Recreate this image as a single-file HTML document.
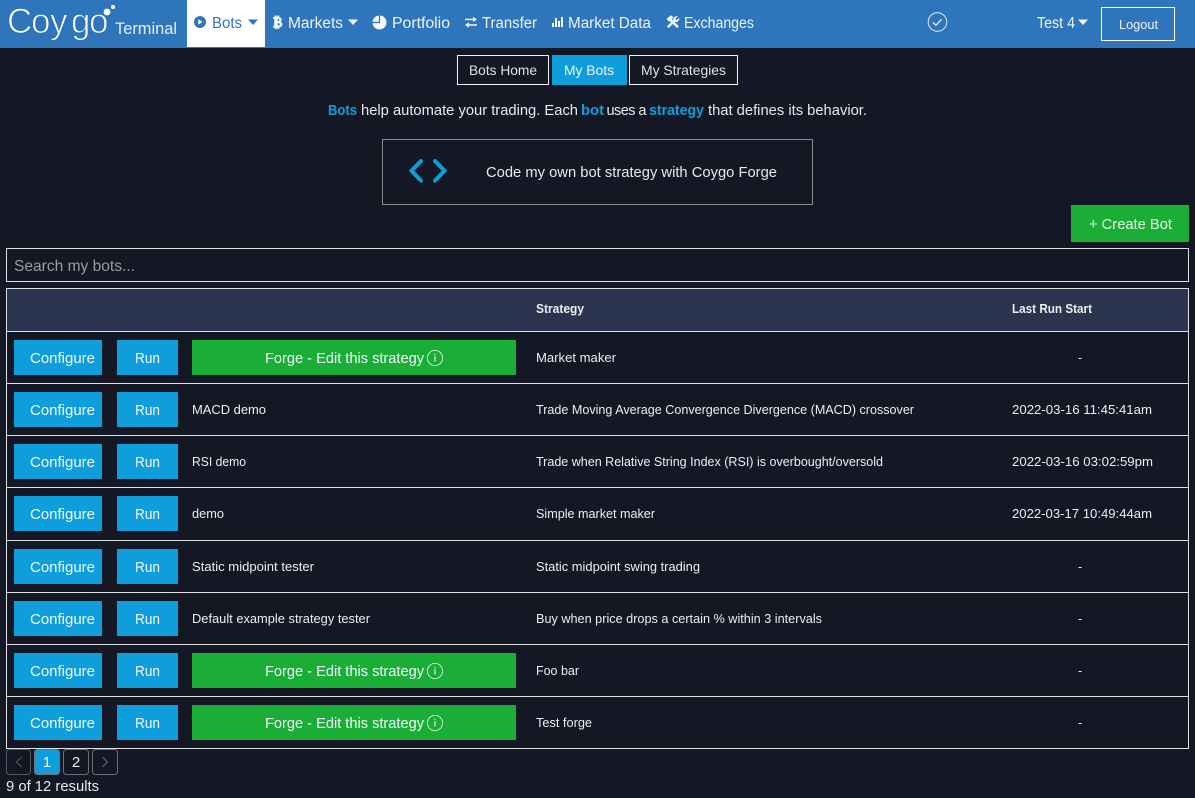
<!DOCTYPE html>
<html lang="en">
<head>
<meta charset="utf-8">
<title>Coygo Terminal - My Bots</title>
<style>
html,body{margin:0;padding:0;background:#141824;width:1195px;height:798px;overflow:hidden}
svg{display:block}
text{font-family:"Liberation Sans",sans-serif;font-size:14px;fill:#fff}
.nav{font-size:15.5px;fill:#eef4fa}
.cell{font-size:12.5px;fill:#eceef0}
.btn{font-size:14.5px;fill:#f2f8fc}
.blue{fill:#0f9edc}
.green{fill:#1aae37}
</style>
</head>
<body>
<svg xmlns="http://www.w3.org/2000/svg" width="1195" height="798" viewBox="0 0 1195 798">
<defs>
<g id="info"><circle r="7.6" fill="none" stroke="#fff" stroke-width=".8"/><rect x="-.5" y="-2" width="1" height="5.5" fill="#fff"/><rect x="-.5" y="-4.2" width="1" height="1.2" fill="#fff"/></g>
</defs>
<rect width="1195" height="798" fill="#141824"/>

<!-- Nav -->
<rect width="1195" height="48" fill="#2e75bb"/>
<rect x="187" width="78" height="47" fill="#fff"/>
<text x="7 31 50 71 89" y="33" stroke="#2e75bb" stroke-width="1" style="font-size:35px">Coygo</text>
<circle cx="107" cy="12" r="3.4" fill="#fff"/><circle cx="113" cy="7" r="2" fill="#fff"/>
<text x="115" y="34" textLength="62" lengthAdjust="spacingAndGlyphs" style="font-size:16.5px;fill:#e6eff8">Terminal</text>

<circle cx="200" cy="22" r="6" fill="#2e75bb"/><path d="M198.300 19.200l4.200 2.800-4.200 2.800z" fill="#fff"/>
<text class="nav" x="212" y="28" textLength="30" lengthAdjust="spacingAndGlyphs" style="fill:#2e75bb">Bots</text>
<path d="M248 19.500h10l-5 5.500z" fill="#2e75bb"/>

<path d="M273.500 17h1.500v-1.300h1.500v1.300h1v-1.300h1.500v1.400c2.600.4 3.300 3.500 1.300 4.700 2.700 1 2.300 5.200-1.300 5.500v1.500h-1.500v-1.300h-1v1.300H275v-1.300h-1.500v-1.800h1v-6.800h-1zm4 1.900v2.300h1c1.300 0 1.300-2.300 0-2.300zm0 4.100v2.600h1.300c1.600 0 1.600-2.600 0-2.600z" fill="#f4f8fc" stroke="#f4f8fc" stroke-width=".5"/>
<text class="nav" x="288" y="28" textLength="55" lengthAdjust="spacingAndGlyphs">Markets</text>
<path d="M348 19.500h10l-5 5.500z" fill="#f4f8fc"/>

<circle cx="379.500" cy="22.500" r="7" fill="#f4f8fc"/><path d="M379.500 15v7.500H372" fill="none" stroke="#2e75bb" stroke-width="1.200"/>
<text class="nav" x="392" y="28" textLength="58" lengthAdjust="spacingAndGlyphs">Portfolio</text>

<path d="M465 18.700h8v-2l4 2.700-4 2.700v-2h-8zM477 24.300h-8v-2l-4 2.700 4 2.700v-2h8z" fill="#f4f8fc"/>
<text class="nav" x="482" y="28" textLength="55" lengthAdjust="spacingAndGlyphs">Transfer</text>

<path d="M552 23h2v4h-2zM555 18h2v9h-2zM558 21h2v6h-2zM561 17h2v10h-2z" fill="#f4f8fc"/>
<text class="nav" x="568" y="28" textLength="83" lengthAdjust="spacingAndGlyphs">Market Data</text>

<path d="M667.800 27.200l7.500-7.500M678 27.200l-7.500-7.500" fill="none" stroke="#f4f8fc" stroke-width="2.500"/>
<path d="M666.500 18.700l4.500-3.500 2.500 2.200-4.500 4.300zM673.500 21.500c-1.300-2.600.8-6 4.300-5.300l-2.300 2.300 1.300 1.500 2.500-2.300c.6 3.500-3 5.600-5.800 3.800z" fill="#f4f8fc"/>
<text class="nav" x="684" y="28" textLength="70" lengthAdjust="spacingAndGlyphs">Exchanges</text>

<circle cx="937.500" cy="22" r="9.300" fill="none" stroke="#e4eef8" stroke-width="1"/>
<path d="M933 22.500l3 2.800 5.500-6" fill="none" stroke="#f4f8fc" stroke-width="1.200"/>
<text class="nav" x="1037" y="28" textLength="38" lengthAdjust="spacingAndGlyphs">Test 4</text>
<path d="M1078 19.500h10l-5 5.500z" fill="#f4f8fc"/>
<rect x="1101.500" y="7.500" width="73" height="33" fill="none" stroke="#fff"/>
<text x="1119" y="29" textLength="39" lengthAdjust="spacingAndGlyphs" style="font-size:13px;fill:#eef4fa">Logout</text>

<!-- Tabs -->
<rect x="457.500" y="55.500" width="91" height="29" fill="none" stroke="#f0f0f0"/>
<text x="469" y="75" textLength="68" lengthAdjust="spacingAndGlyphs" style="fill:#dfe1e4">Bots Home</text>
<rect x="552" y="55" width="75" height="30" class="blue"/>
<text x="564" y="75" textLength="50" lengthAdjust="spacingAndGlyphs" style="fill:#e8f5fc">My Bots</text>
<rect x="629.500" y="55.500" width="108" height="29" fill="none" stroke="#f0f0f0"/>
<text x="641" y="75" textLength="85" lengthAdjust="spacingAndGlyphs" style="fill:#dfe1e4">My Strategies</text>

<!-- Intro -->
<text x="328" y="115" textLength="29" lengthAdjust="spacingAndGlyphs" style="font-size:14.500px;font-weight:bold;fill:#0f9edc">Bots</text>
<text x="361" y="115" textLength="217" lengthAdjust="spacingAndGlyphs" style="font-size:14.500px;fill:#e8e9eb">help automate your trading. Each</text>
<text x="581" y="115" textLength="23" lengthAdjust="spacingAndGlyphs" style="font-size:14.500px;font-weight:bold;fill:#0f9edc">bot</text>
<text x="606.500" y="115" textLength="40" lengthAdjust="spacing" style="font-size:14.500px;fill:#e8e9eb">uses a</text>
<text x="649" y="115" textLength="55" lengthAdjust="spacingAndGlyphs" style="font-size:14.500px;font-weight:bold;fill:#0f9edc">strategy</text>
<text x="708" y="115" textLength="159" lengthAdjust="spacingAndGlyphs" style="font-size:14.500px;fill:#e8e9eb">that defines its behavior.</text>

<!-- Forge CTA -->
<rect x="382.500" y="139.500" width="430" height="65" fill="none" stroke="#8a8b8e"/>
<path d="M421 161l-9.500 9.800 9.500 9.800M435 161l9.500 9.800-9.500 9.800" fill="none" stroke="#0f9edc" stroke-width="4" stroke-linecap="round"/>
<text x="486" y="177" textLength="291" lengthAdjust="spacingAndGlyphs" style="font-size:15px;fill:#e8e9eb">Code my own bot strategy with Coygo Forge</text>

<!-- Create -->
<rect x="1071" y="205" width="118" height="37" class="green"/>
<text x="1089" y="229" textLength="83" lengthAdjust="spacingAndGlyphs" style="font-size:15px;fill:#eaf7ec">+ Create Bot</text>

<!-- Search -->
<rect x="6.500" y="248.500" width="1182" height="33" fill="none" stroke="#dfe1e4"/>
<text x="14" y="271" textLength="121" lengthAdjust="spacingAndGlyphs" style="font-size:16px;fill:#9a9ca3">Search my bots...</text>

<!-- Table -->
<rect x="6.500" y="288.500" width="1182" height="43" fill="#2b344f"/>
<text x="536" y="313" textLength="48" lengthAdjust="spacingAndGlyphs" style="font-size:12.500px;font-weight:bold;fill:#eceef0">Strategy</text>
<text x="1012" y="313" textLength="80" lengthAdjust="spacingAndGlyphs" style="font-size:12.500px;font-weight:bold;fill:#eceef0">Last Run Start</text>
<rect x="6.500" y="288.500" width="1182" height="460" fill="none" stroke="#dfe1e4"/>
<path d="M6 331.500h1183M6 383.500h1183M6 435.500h1183M6 487.500h1183M6 540.500h1183M6 592.500h1183M6 644.500h1183M6 696.500h1183" stroke="#dfe1e4" fill="none"/>

<!-- Row 1 -->
<rect x="14" y="340" width="88" height="35" class="blue"/><text class="btn" x="30" y="363" textLength="65" lengthAdjust="spacingAndGlyphs">Configure</text>
<rect x="117" y="340" width="61" height="35" class="blue"/><text class="btn" x="135" y="363" textLength="25" lengthAdjust="spacingAndGlyphs">Run</text>
<rect x="192" y="340" width="324" height="35" class="green"/><text class="btn" x="265" y="363" textLength="159" lengthAdjust="spacingAndGlyphs">Forge - Edit this strategy</text><use href="#info" x="435" y="358"/>
<text class="cell" x="536" y="362" textLength="80" lengthAdjust="spacingAndGlyphs">Market maker</text>
<text class="cell" x="1078" y="362">-</text>

<!-- Row 2 -->
<rect x="14" y="392" width="88" height="35" class="blue"/><text class="btn" x="30" y="415" textLength="65" lengthAdjust="spacingAndGlyphs">Configure</text>
<rect x="117" y="392" width="61" height="35" class="blue"/><text class="btn" x="135" y="415" textLength="25" lengthAdjust="spacingAndGlyphs">Run</text>
<text class="cell" x="192" y="414" textLength="74" lengthAdjust="spacingAndGlyphs">MACD demo</text>
<text class="cell" x="536" y="414" textLength="378" lengthAdjust="spacingAndGlyphs">Trade Moving Average Convergence Divergence (MACD) crossover</text>
<text class="cell" x="1012" y="414" textLength="140" lengthAdjust="spacingAndGlyphs">2022-03-16 11:45:41am</text>

<!-- Row 3 -->
<rect x="14" y="444" width="88" height="35" class="blue"/><text class="btn" x="30" y="467" textLength="65" lengthAdjust="spacingAndGlyphs">Configure</text>
<rect x="117" y="444" width="61" height="35" class="blue"/><text class="btn" x="135" y="467" textLength="25" lengthAdjust="spacingAndGlyphs">Run</text>
<text class="cell" x="192" y="466" textLength="54" lengthAdjust="spacingAndGlyphs">RSI demo</text>
<text class="cell" x="536" y="466" textLength="347" lengthAdjust="spacingAndGlyphs">Trade when Relative String Index (RSI) is overbought/oversold</text>
<text class="cell" x="1012" y="466" textLength="141" lengthAdjust="spacingAndGlyphs">2022-03-16 03:02:59pm</text>

<!-- Row 4 -->
<rect x="14" y="496" width="88" height="35" class="blue"/><text class="btn" x="30" y="519" textLength="65" lengthAdjust="spacingAndGlyphs">Configure</text>
<rect x="117" y="496" width="61" height="35" class="blue"/><text class="btn" x="135" y="519" textLength="25" lengthAdjust="spacingAndGlyphs">Run</text>
<text class="cell" x="192" y="518" textLength="32" lengthAdjust="spacingAndGlyphs">demo</text>
<text class="cell" x="536" y="518" textLength="119" lengthAdjust="spacingAndGlyphs">Simple market maker</text>
<text class="cell" x="1012" y="518" textLength="140" lengthAdjust="spacingAndGlyphs">2022-03-17 10:49:44am</text>

<!-- Row 5 -->
<rect x="14" y="549" width="88" height="35" class="blue"/><text class="btn" x="30" y="572" textLength="65" lengthAdjust="spacingAndGlyphs">Configure</text>
<rect x="117" y="549" width="61" height="35" class="blue"/><text class="btn" x="135" y="572" textLength="25" lengthAdjust="spacingAndGlyphs">Run</text>
<text class="cell" x="192" y="571" textLength="122" lengthAdjust="spacingAndGlyphs">Static midpoint tester</text>
<text class="cell" x="536" y="571" textLength="164" lengthAdjust="spacingAndGlyphs">Static midpoint swing trading</text>
<text class="cell" x="1078" y="571">-</text>

<!-- Row 6 -->
<rect x="14" y="601" width="88" height="35" class="blue"/><text class="btn" x="30" y="624" textLength="65" lengthAdjust="spacingAndGlyphs">Configure</text>
<rect x="117" y="601" width="61" height="35" class="blue"/><text class="btn" x="135" y="624" textLength="25" lengthAdjust="spacingAndGlyphs">Run</text>
<text class="cell" x="192" y="623" textLength="178" lengthAdjust="spacingAndGlyphs">Default example strategy tester</text>
<text class="cell" x="536" y="623" textLength="286" lengthAdjust="spacingAndGlyphs">Buy when price drops a certain % within 3 intervals</text>
<text class="cell" x="1078" y="623">-</text>

<!-- Row 7 -->
<rect x="14" y="653" width="88" height="35" class="blue"/><text class="btn" x="30" y="676" textLength="65" lengthAdjust="spacingAndGlyphs">Configure</text>
<rect x="117" y="653" width="61" height="35" class="blue"/><text class="btn" x="135" y="676" textLength="25" lengthAdjust="spacingAndGlyphs">Run</text>
<rect x="192" y="653" width="324" height="35" class="green"/><text class="btn" x="265" y="676" textLength="159" lengthAdjust="spacingAndGlyphs">Forge - Edit this strategy</text><use href="#info" x="435" y="671"/>
<text class="cell" x="536" y="675" textLength="43" lengthAdjust="spacingAndGlyphs">Foo bar</text>
<text class="cell" x="1078" y="675">-</text>

<!-- Row 8 -->
<rect x="14" y="705" width="88" height="35" class="blue"/><text class="btn" x="30" y="728" textLength="65" lengthAdjust="spacingAndGlyphs">Configure</text>
<rect x="117" y="705" width="61" height="35" class="blue"/><text class="btn" x="135" y="728" textLength="25" lengthAdjust="spacingAndGlyphs">Run</text>
<rect x="192" y="705" width="324" height="35" class="green"/><text class="btn" x="265" y="728" textLength="159" lengthAdjust="spacingAndGlyphs">Forge - Edit this strategy</text><use href="#info" x="435" y="723"/>
<text class="cell" x="536" y="727" textLength="56" lengthAdjust="spacingAndGlyphs">Test forge</text>
<text class="cell" x="1078" y="727">-</text>

<!-- Pagination -->
<rect x="6.500" y="749.500" width="24" height="25" rx="3" fill="none" stroke="#55585f"/>
<path d="M21.500 757l-5 5 5 5" fill="none" stroke="#5c5f66" stroke-width=".9"/>
<rect x="34.500" y="749.500" width="25" height="25" rx="3" fill="#0f9edc" stroke="#6d7076"/>
<text x="47" y="767" text-anchor="middle" style="font-size:15px;fill:#fff">1</text>
<rect x="63.500" y="749.500" width="25" height="25" rx="3" fill="none" stroke="#6d7076"/>
<text x="76" y="767" text-anchor="middle" style="font-size:15px;fill:#f0f0f0">2</text>
<rect x="92.500" y="749.500" width="25" height="25" rx="3" fill="none" stroke="#6d7076"/>
<path d="M102.500 757l5 5-5 5" fill="none" stroke="#6d7076" stroke-width=".9"/>
<text x="6" y="791" textLength="93" lengthAdjust="spacingAndGlyphs" style="font-size:14.500px;fill:#e8e9eb">9 of 12 results</text>
</svg>
</body>
</html>
